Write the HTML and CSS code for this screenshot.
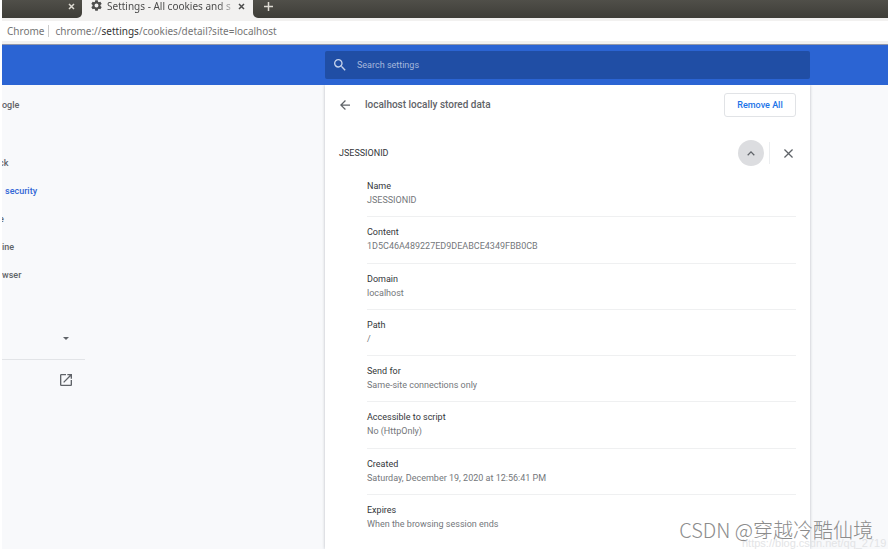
FILE: index.html
```html
<!DOCTYPE html>
<html lang="en">
<head>
<meta charset="utf-8">
<title>Settings - All cookies and site data</title>
<link rel="stylesheet" href="styles.css">
</head>
<body>
<div class="window">
  <div class="tabs">
    <div class="tab tab-left"><button class="tab-close" aria-label="Close tab"><svg width="7" height="7" viewBox="0 0 7 7"><path d="M1 1l5 5M6 1L1 6"/></svg></button></div>
    <div class="tab tab-active">
      <svg class="gear" width="11" height="11" viewBox="2 2 20 20"><path d="M19.14 12.94c.04-.3.06-.61.06-.94s-.02-.64-.07-.94l2.03-1.58c.18-.14.23-.41.12-.61l-1.92-3.32c-.12-.22-.37-.29-.59-.22l-2.39.96c-.5-.38-1.03-.7-1.62-.94l-.36-2.54c-.04-.24-.24-.41-.48-.41h-3.84c-.24 0-.43.17-.47.41l-.36 2.54c-.59.24-1.13.57-1.62.94l-2.39-.96c-.22-.08-.47 0-.59.22L2.74 8.87c-.12.21-.08.47.12.61l2.03 1.58c-.05.3-.09.63-.09.94s.02.64.07.94l-2.03 1.58c-.18.14-.23.41-.12.61l1.92 3.32c.12.22.37.29.59.22l2.39-.96c.5.38 1.03.7 1.62.94l.36 2.54c.05.24.24.41.48.41h3.84c.24 0 .44-.17.47-.41l.36-2.54c.59-.24 1.13-.56 1.62-.94l2.39.96c.22.08.47 0 .59-.22l1.92-3.32c.12-.22.07-.47-.12-.61l-2.01-1.58zM12 15.6A3.6 3.6 0 1 1 12 8.4a3.6 3.6 0 0 1 0 7.2z"/></svg>
      <span class="tab-title">Settings - All cookies and s</span>
      <button class="tab-close" aria-label="Close tab"><svg width="7" height="7" viewBox="0 0 7 7"><path d="M1 1l5 5M6 1L1 6"/></svg></button>
    </div>
    <div class="tab tab-rest"><button class="tab-close" aria-label="New tab"><svg width="9" height="9" viewBox="0 0 9 9"><path d="M4.500 0v9M0 4.500h9"/></svg></button></div>
  </div>
  <div class="address"><span class="scheme">Chrome</span><span class="url">chrome://<b>settings</b>/cookies/detail?site=localhost</span></div>
  <header class="topbar">
    <label class="search">
      <svg width="12" height="12" viewBox="3 3 18 18"><path d="M15.500 14h-.79l-.28-.27A6.470 6.470 0 0 0 16 9.500 6.500 6.500 0 1 0 9.500 16c1.610 0 3.090-.59 4.230-1.570l.27.28v.79l5 4.990L20.490 19l-4.990-5zm-6 0C7.010 14 5 11.990 5 9.500S7.010 5 9.500 5 14 7.010 14 9.500 11.990 14 9.500 14z"/></svg>
      <input type="search" placeholder="Search settings" aria-label="Search settings">
    </label>
  </header>
  <div class="page">
    <nav class="menu">
      <a href="#">ogle</a>
      <span class="menu-gap"></span>
      <a href="#" class="cut">ck</a>
      <a href="#" class="selected">security</a>
      <a href="#" class="cut">e</a>
      <a href="#">ine</a>
      <a href="#">wser</a>
      <button class="menu-icon advanced" aria-label="Advanced"><svg width="6" height="3" viewBox="0 0 6 3"><path d="M0 0h6L3 3z"/></svg></button>
      <a href="#" class="menu-icon extensions" aria-label="Extensions"><svg width="12" height="12" viewBox="3 3 18 18"><path d="M19 19H5V5h7V3H5a2 2 0 0 0-2 2v14a2 2 0 0 0 2 2h14c1.100 0 2-.9 2-2v-7h-2v7zM14 3v2h3.590l-9.830 9.830 1.410 1.410L19 6.410V10h2V3h-7z"/></svg></a>
    </nav>
    <main class="card">
      <div class="card-head">
        <button class="icon-button" aria-label="Back"><svg width="10" height="10" viewBox="4 4 16 16"><path d="M20 11H7.830l5.590-5.590L12 4l-8 8 8 8 1.410-1.410L7.830 13H20v-2z"/></svg></button>
        <h1>localhost locally stored data</h1>
        <button class="remove">Remove All</button>
      </div>
      <div class="cookie-head">
        <h2>JSESSIONID</h2>
        <button class="icon-button collapse" aria-label="Collapse"><svg width="8" height="5" viewBox="6 8 12 8"><path d="M12 8l-6 6 1.410 1.410L12 10.830l4.590 4.580L18 14z"/></svg></button>
        <span class="divider"></span>
        <button class="icon-button" aria-label="Remove JSESSIONID"><svg width="9" height="9" viewBox="5 5 14 14"><path d="M19 6.410L17.590 5 12 10.590 6.410 5 5 6.410 10.590 12 5 17.590 6.410 19 12 13.410 17.590 19 19 17.590 13.410 12z"/></svg></button>
      </div>
      <dl class="details">
        <div><dt>Name</dt><dd>JSESSIONID</dd></div>
        <div><dt>Content</dt><dd>1D5C46A489227ED9DEABCE4349FBB0CB</dd></div>
        <div><dt>Domain</dt><dd>localhost</dd></div>
        <div><dt>Path</dt><dd>/</dd></div>
        <div><dt>Send for</dt><dd>Same-site connections only</dd></div>
        <div><dt>Accessible to script</dt><dd>No (HttpOnly)</dd></div>
        <div><dt>Created</dt><dd>Saturday, December 19, 2020 at 12:56:41 PM</dd></div>
        <div><dt>Expires</dt><dd>When the browsing session ends</dd></div>
      </dl>
    </main>
  </div>
  <div class="blog-url">https://blog.csdn.net/qq_2719</div>
  <div class="watermark">CSDN @穿越冷酷仙境</div>
</div>
</body>
</html>
```
FILE: styles.css
```css
* { box-sizing: border-box; }
body { margin: 0; background: #fff; font: 9px/14px Roboto, sans-serif; color: #33363a; }
button { padding: 0; border: 0; background: none; font: inherit; }
a { color: inherit; text-decoration: none; }
svg { display: block; fill: currentColor; }
h1, h2, dl, dd { margin: 0; }

.window {
  position: relative;
  display: flex;
  flex-direction: column;
  min-height: 100vh;
  margin-left: 2px;
  overflow: hidden;
}

/* Browser frame */
.tabs { display: flex; height: 21px; background: #f2f1f0; }
.tab { display: flex; height: 18px; background: linear-gradient(#504f49, #3e3d38); color: #dedbd3; }
.tab-left { width: 80px; justify-content: flex-end; padding-right: 7px; border-radius: 0 0 5px 0; }
.tab-active { width: 171px; padding: 0 8px 0 9px; background: #f2f1f0; color: #4c4c4c; }
.tab-rest { flex: 1; padding-left: 11px; border-radius: 0 0 0 5px; }
.gear { flex: none; }
.tab-title {
  flex: 1;
  height: 14px;
  margin-left: 5px;
  overflow: hidden;
  white-space: nowrap;
  font: 10px/12px "Noto Sans", sans-serif;
  -webkit-mask-image: linear-gradient(90deg, #000 85%, transparent);
  mask-image: linear-gradient(90deg, #000 85%, transparent);
}
.tab-close { display: flex; align-items: center; height: 12px; color: inherit; }
.tab-close svg { stroke: currentColor; stroke-width: 1.5; }
.address {
  display: flex;
  align-items: center;
  height: 20px;
  padding-left: 5px;
  font: 10px/12px "Noto Sans", sans-serif;
  color: #757575;
}
.scheme { padding-right: 4px; margin-right: 6px; border-right: 1px solid #ccc; }
.url b { font-weight: 400; color: #333; }

/* Settings header */
.topbar {
  padding: 6px 78px 6px 323px;
  border-top: 1px solid #9297a8;
  background: #2b64d3;
  box-shadow: 0 -3px #f2f1f0;
  margin-top: 3px;
}
.search {
  display: flex;
  align-items: center;
  height: 28px;
  padding-left: 9px;
  border-radius: 2px;
  background: #204ea5;
  color: #c6d3ec;
}
.search input {
  flex: 1;
  margin-left: 11px;
  padding: 0;
  border: 0;
  outline: 0;
  background: none;
  font: inherit;
  color: inherit;
}
.search input::placeholder { color: #a6b8dc; opacity: 1; }

.page {
  display: grid;
  flex: 1;
  grid-template-columns: 323px minmax(0, 1fr) 78px;
  background: #f8f9fb;
}

/* Side menu */
.menu { display: flex; flex-direction: column; width: 83px; padding-top: 6px; font-weight: 500; color: #5f6368; }
.menu > a { display: flex; align-items: center; height: 28px; }
.menu-gap { height: 30px; }
.menu .cut { margin-left: -3px; }
.menu .selected { padding-left: 3px; color: #3367d6; }
.menu > .menu-icon { display: flex; align-items: center; justify-content: flex-end; padding-right: 13px; color: #5f6368; }
.menu > .advanced { height: 42px; margin-top: 29px; padding-right: 16px; border-bottom: 1px solid #e2e4e7; }
.menu > .extensions { height: 40px; }

/* Cookie card */
.card {
  display: flex;
  flex-direction: column;
  padding: 0 14px 8px;
  background: #fff;
  box-shadow: 0 0 3px #b8bcc2;
  clip-path: inset(0 -4px);
}
.card-head { display: flex; align-items: center; height: 40px; }
h1 { flex: 1; margin-left: 14px; font-size: 10px; font-weight: 500; color: #5f6368; }
.icon-button {
  display: flex;
  align-items: center;
  justify-content: center;
  width: 12px;
  height: 26px;
  color: #5f6368;
}
.remove {
  width: 72px;
  height: 24px;
  border: 1px solid #e1e3e6;
  border-radius: 3px;
  font-weight: 500;
  color: #1a73e8;
}
.cookie-head { display: flex; align-items: center; height: 46px; padding: 10px 2px 0 0; }
h2 { flex: 1; font-size: 9px; font-weight: 400; }
.collapse { width: 26px; border-radius: 50%; background: #dcdde0; }
.divider { width: 1px; height: 22px; margin: 0 12px 0 5px; background: #eceef0; }
.details { display: grid; flex: 1; grid-auto-rows: 1fr; margin-left: 28px; }
.details div { padding: 8px 0 9px; border-bottom: 1px solid #eff0f1; }
.details div:last-child { border-bottom: 0; }
dd { color: #74777b; }

/* Overlaid credits */
.watermark, .blog-url { position: absolute; white-space: nowrap; }
.watermark {
  right: 15px;
  bottom: 5px;
  font: 300 20px/28px "Noto Sans CJK SC", sans-serif;
  color: #8c8c8c;
}
.blog-url {
  left: 740px;
  bottom: -1px;
  font: 11px/14px "Liberation Sans", sans-serif;
  color: #e3e4e6;
}
```
